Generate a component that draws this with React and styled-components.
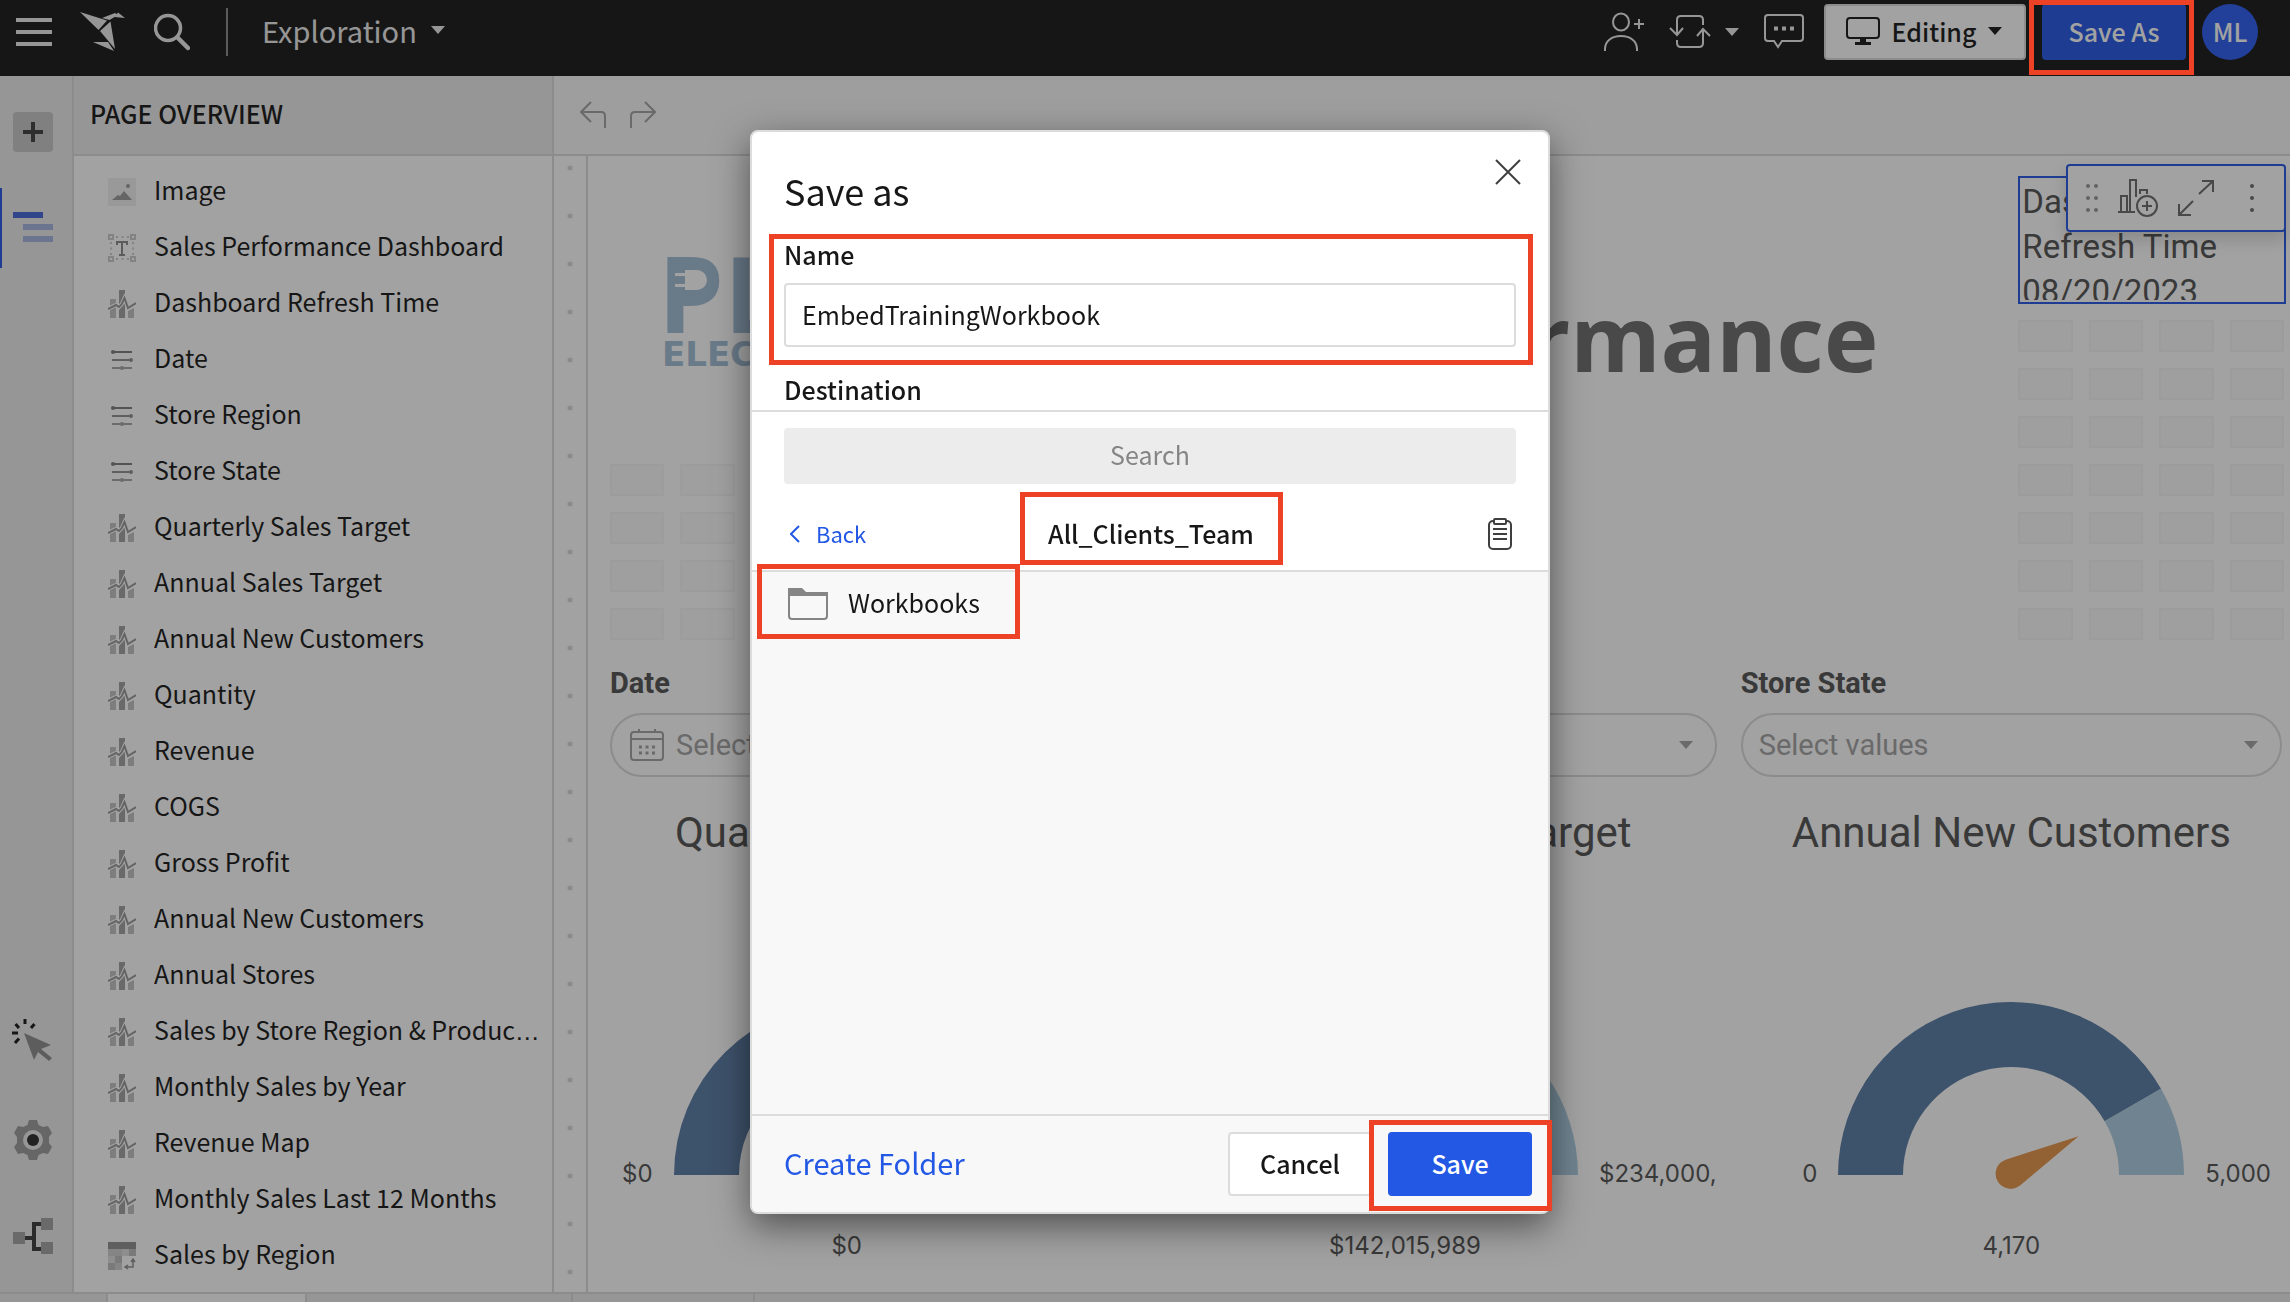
import React from "react";
import styled, { createGlobalStyle, css } from "styled-components";

const ui = `"Noto Sans CJK KR", "Noto Sans", sans-serif`;
const dash = `Roboto, "Open Sans", sans-serif`;
const blue = "#2358e4";
const line = "#dadada";

const GlobalStyle = createGlobalStyle`
  *, *::before, *::after { box-sizing: border-box; }
  body { margin: 0; background: #fff; color: #171717; font-family: ${ui}; font-size: 25px; line-height: 36px; overflow: hidden; }
  button, input, select { font: inherit; color: inherit; }
  button { padding: 0; border: 0; background: none; cursor: pointer; }
  h1, h2, h3, p, ul { margin: 0; padding: 0; font-weight: 400; }
  svg { display: block; flex: none; }
`;

const Page = styled.div`
  display: flex;
  flex-direction: column;
  height: 100vh;
`;

/* ---------- top bar ---------- */
const TopBar = styled.header`
  flex: none;
  display: flex;
  align-items: flex-start;
  justify-content: space-between;
  height: 76px;
  padding: 4px 32px 0 16px;
  background: #171717;
  color: #ececec;
`;
const BarGroup = styled.div`
  display: flex;
  align-items: center;
  height: 56px;
  gap: ${(p) => p.$gap}px;
`;
const BarTools = styled(BarGroup)`
  padding-right: 4px;
`;
const IconButton = styled.button`
  display: flex;
  align-items: center;
  gap: 14px;
`;
const DocButton = styled.button`
  display: flex;
  align-items: center;
  gap: 14px;
  height: 48px;
  margin-left: 8px;
  padding: 0 0 4px 34px;
  border-left: 2px solid #8a8a8a;
  font-size: 29px;
`;
const EditButton = styled.button`
  display: flex;
  align-items: center;
  justify-content: center;
  gap: 12px;
  width: 202px;
  height: 56px;
  padding: 0 2px 2px 0;
  border: 2px solid ${line};
  border-radius: 4px;
  background: #fff;
  color: #171717;
  font-weight: 500;
`;
const SaveAsButton = styled.button`
  width: 144px;
  height: 56px;
  padding-bottom: 2px;
  border-radius: 4px;
  background: ${blue};
  color: #fff;
  font-weight: 500;
`;
const Avatar = styled.button`
  width: 56px;
  height: 56px;
  padding-bottom: 2px;
  border-radius: 50%;
  background: #2a5cf0;
  color: #fff;
  font-weight: 500;
`;

/* ---------- body ---------- */
const Body = styled.div`
  flex: 1;
  min-height: 0;
  display: flex;
`;
const Rail = styled.nav`
  flex: none;
  display: flex;
  flex-direction: column;
  align-items: center;
  width: 74px;
  padding: 36px 7px 38px 0;
  border-right: 2px solid ${line};
  background: #ececec;
`;
const AddButton = styled.button`
  display: grid;
  place-items: center;
  width: 40px;
  height: 40px;
  border-radius: 4px;
  background: #c6c6c6;
`;
const RailTab = styled.button`
  align-self: stretch;
  display: flex;
  align-items: center;
  height: 80px;
  margin-top: 36px;
  padding: 0 0 2px 11px;
  border-left: 2px solid ${blue};
`;
const RailTools = styled.div`
  display: flex;
  flex-direction: column;
  align-items: center;
  gap: 58px;
  margin-top: auto;
`;
const Panel = styled.aside`
  flex: none;
  display: flex;
  flex-direction: column;
  width: 480px;
  border-right: 2px solid ${line};
`;
const PanelHead = styled.h2`
  display: flex;
  align-items: center;
  height: 80px;
  padding: 0 16px 4px;
  border-bottom: 2px solid ${line};
  background: #ececec;
  font-size: 25px;
  font-weight: 500;
`;
const List = styled.ul`
  flex: 1;
  min-height: 0;
  overflow: hidden;
  padding: 8px 8px 0 34px;
  list-style: none;
`;
const Row = styled.li`
  display: flex;
  align-items: center;
  gap: 18px;
  height: 56px;
`;
const RowLabel = styled.span`
  padding-bottom: 4px;
  overflow: hidden;
  font-family: "Liberation Sans", sans-serif;
  white-space: nowrap;
  text-overflow: ellipsis;
`;
const RowText = styled.span`
  font-family: ${ui};
`;

/* ---------- workbook ---------- */
const Work = styled.main`
  flex: 1;
  min-width: 0;
  display: flex;
  flex-direction: column;
`;
const WorkBar = styled.div`
  flex: none;
  display: flex;
  align-items: center;
  gap: 24px;
  height: 80px;
  padding: 0 26px;
  border-bottom: 2px solid ${line};
  background: #f8f8f8;
`;
const Stage = styled.div`
  flex: 1;
  min-height: 0;
  display: flex;
`;
const Gutter = styled.div`
  flex: none;
  width: 34px;
  border-right: 2px solid ${line};
  background: radial-gradient(circle at 16px 12px, #d8d8d8 2px, transparent 3px) 0 0 / 34px 48px;
`;
const Canvas = styled.div`
  flex: 1;
  min-width: 0;
  overflow: hidden;
  padding: 20px 8px 0 22px;
  font-family: ${dash};
  color: #515151;
`;
const Board = styled.section`
  display: grid;
  grid-template-columns: repeat(24, minmax(0, 1fr));
  grid-template-rows: repeat(10, 32px);
  gap: 16px;
  margin-right: -2px;
`;
const Cell = styled.div`
  border: 2px solid #f5f5f5;
  background: #fbfbfb;
`;
const Logo = styled.div`
  position: relative;
  grid-area: 1 / 1 / 7 / 6;
  padding: 70px 0 0 48px;
  color: #a0bcd5;
  white-space: nowrap;
  svg { position: absolute; left: 65px; top: 92px; }
`;
const LogoName = styled.div`
  font: 700 105px/94px "Open Sans", sans-serif;
`;
const LogoSub = styled.div`
  padding-left: 4px;
  font: 700 34px/28px "DejaVu Sans", sans-serif;
`;
const BoardTitle = styled.h1`
  grid-area: 1 / 6 / 8 / 20;
  align-self: center;
  padding: 2px 0 0 8px;
  color: #6c6c6c;
  font-family: "Open Sans", sans-serif;
  font-size: 92px;
  font-weight: 700;
  line-height: 112px;
  text-align: center;
  white-space: nowrap;
`;
const RefreshBox = styled.div`
  position: relative;
  grid-area: 1 / 21 / 4 / 25;
  margin-right: -2px;
  border: 2px solid ${blue};
`;
const RefreshText = styled.p`
  height: 122px;
  padding: 1px 2px;
  overflow: hidden;
  font-size: 33px;
  line-height: 45px;
`;
const FloatBar = styled.div`
  position: absolute;
  top: -14px;
  right: -2px;
  display: flex;
  align-items: center;
  gap: 20px;
  width: 220px;
  height: 68px;
  padding: 0 30px 0 18px;
  border: 2px solid ${blue};
  border-radius: 4px;
  background: #fff;
  box-shadow: 0 8px 16px rgba(0, 0, 0, 0.16);
  svg:last-child { margin-left: auto; }
`;
const Thirds = styled.section`
  display: grid;
  grid-template-columns: repeat(3, minmax(0, 1fr));
  gap: 24px;
  margin-top: ${(p) => p.$top}px;
`;
const Field = styled.div`
  display: flex;
  flex-direction: column;
  gap: 14px;
`;
const FieldLabel = styled.label`
  font-size: 29px;
  font-weight: 700;
  line-height: 32px;
`;
const Pill = styled.div`
  display: flex;
  align-items: center;
  gap: 12px;
  height: 64px;
  padding: 0 22px 0 ${(p) => (p.$icon ? 18 : 16)}px;
  border: 2px solid ${line};
  border-radius: 32px;
  color: #a2a2a2;
`;
const pillControl = css`
  flex: 1;
  min-width: 0;
  padding: 0;
  border: 0;
  outline: 0;
  background: none;
  appearance: none;
  color: #a2a2a2;
  font-size: 29px;
  line-height: 40px;
`;
const PillSelect = styled.select`${pillControl}`;
const PillInput = styled.input`
  ${pillControl}
  &::placeholder { color: #a2a2a2; opacity: 1; }
`;
const Gauge = styled.article`
  overflow: hidden;
  font-family: Inter, sans-serif;
`;
const GaugeTitle = styled.h3`
  font-family: ${dash};
  font-size: 42px;
  line-height: 56px;
  text-align: center;
`;
const Dial = styled.div`
  display: grid;
  grid-template-columns: minmax(0, 1fr) 346px minmax(0, 1fr);
  align-items: end;
  column-gap: 21px;
  margin-top: 141px;
  padding-right: ${(p) => p.$shift}px;
  font-size: 24px;
  line-height: 32px;
  white-space: nowrap;
`;
const DialEnd = styled.span`
  height: 36px;
  text-align: ${(p) => p.$align};
`;
const DialValue = styled.span`
  grid-column: 2;
  margin-top: 36px;
  text-align: center;
`;
const Sheets = styled.footer`
  flex: none;
  display: grid;
  grid-template-columns: 108px 199px 266px 182px 1fr;
  height: 10px;
  border-top: 2px solid ${line};
  background: #ececec;
`;
const Sheet = styled.div`
  border-right: ${(p) => (p.$last ? 0 : 2)}px solid ${line};
  background: ${(p) => (p.$active ? "#fff" : "none")};
`;

/* ---------- dialog ---------- */
const Backdrop = styled.div`
  position: fixed;
  inset: 0;
  display: flex;
  justify-content: center;
  align-items: flex-start;
  padding: 130px 0 0 10px;
  background: rgba(23, 23, 23, 0.4);
`;
const Mark = styled.div`
  position: absolute;
  top: ${(p) => p.$t}px;
  right: ${(p) => p.$r}px;
  bottom: ${(p) => p.$b}px;
  left: ${(p) => p.$l}px;
  border: 5px solid #ee4226;
  pointer-events: none;
`;
const SaveAsMark = styled.div`
  position: absolute;
  top: 0;
  right: 96px;
  width: 165px;
  height: 75px;
  border: 5px solid #ee4226;
  pointer-events: none;
`;
const Dialog = styled.form`
  display: flex;
  flex-direction: column;
  width: 800px;
  height: 1084px;
  border: 2px solid #dcdcdc;
  border-radius: 8px;
  background: #fff;
  box-shadow: 0 12px 36px rgba(0, 0, 0, 0.5);
`;
const DialogTop = styled.div`
  display: flex;
  justify-content: space-between;
  padding: 26px 26px 0 32px;
`;
const DialogTitle = styled.h2`
  padding-top: 8px;
  font-size: 36px;
  line-height: 48px;
`;
const CloseButton = styled.button`
  align-self: flex-start;
  padding: 1px;
`;
const NameField = styled.div`
  position: relative;
  display: flex;
  flex-direction: column;
  gap: 11px;
  margin: 22px 32px 0;
`;
const DialogLabel = styled.label`
  font-weight: 500;
  line-height: 36px;
`;
const NameInput = styled.input`
  height: 64px;
  padding: 0 16px 2px;
  border: 2px solid #dcdcdc;
  border-radius: 4px;
  outline: 0;
`;
const Destination = styled.div`
  padding: 24px 32px 3px;
  border-bottom: 2px solid #dcdcdc;
`;
const SearchInput = styled.input`
  height: 56px;
  margin: 16px 32px 0;
  padding: 0 16px 4px;
  border: 0;
  border-radius: 4px;
  background: #ececec;
  text-align: center;
  outline: 0;
  &::placeholder { color: #858585; opacity: 1; }
`;
const PathRow = styled.div`
  display: grid;
  grid-template-columns: 1fr auto 1fr;
  align-items: center;
  height: 88px;
  padding: 14px 36px 0 38px;
  border-bottom: 2px solid #dcdcdc;
`;
const BackButton = styled.button`
  justify-self: start;
  display: flex;
  align-items: center;
  gap: 16px;
  color: ${blue};
  font-size: 22px;
  span { padding-bottom: 2px; }
`;
const Folder = styled.div`
  position: relative;
  padding-bottom: 2px;
  font-weight: 500;
`;
const ClipButton = styled.button`
  justify-self: end;
`;
const Files = styled.div`
  flex: 1;
  background: #f8f8f8;
`;
const FileRow = styled.button`
  position: relative;
  display: flex;
  align-items: center;
  gap: 20px;
  height: 64px;
  padding: 0 40px 0 36px;
  span { padding-bottom: 4px; }
`;
const DialogFoot = styled.div`
  display: flex;
  align-items: center;
  gap: 16px;
  padding: 16px 16px 16px 32px;
  border-top: 2px solid #dcdcdc;
  border-radius: 0 0 6px 6px;
  background: #f8f8f8;
`;
const CreateButton = styled.button`
  margin-right: auto;
  padding-bottom: 4px;
  color: ${blue};
  font-size: 29px;
`;
const ActionButton = styled.button`
  width: 144px;
  height: 64px;
  padding-bottom: 2px;
  border: ${(p) => (p.$primary ? "0" : "2px solid #dcdcdc")};
  border-radius: 4px;
  background: ${(p) => (p.$primary ? blue : "#fff")};
  color: ${(p) => (p.$primary ? "#fff" : "#171717")};
  font-weight: 500;
`;
const ActionWrap = styled.div`
  position: relative;
  display: flex;
`;

/* ---------- icons ---------- */
const Caret = ({ size = 14 }) => (
  <svg width={size} height="8" viewBox="0 0 14 8"><path d="M0 0h14L7 8z" fill="currentColor" /></svg>
);
const MenuIcon = () => (
  <svg width="36" height="28" fill="currentColor"><path d="M0 0h36v4H0zM0 12h36v4H0zM0 24h36v4H0z" /></svg>
);
const BirdIcon = () => (
  <svg width="46" height="40" viewBox="0 0 46 40" fill="currentColor">
    <path d="M0 0 27 8.500 18.500 18z" /><path d="M22 6 35 1l3 2-8.500 5z" /><path d="M38 .500 45 6 34.500 5z" />
    <path d="M20 19 30.500 9.500 35 37z" /><path d="M13 30h15l6 9z" />
  </svg>
);
const SearchIcon = () => (
  <svg width="36" height="38" viewBox="0 0 36 38" fill="none" stroke="currentColor">
    <circle cx="14" cy="15" r="12.500" strokeWidth="3.500" /><path d="m24 25 10 10" strokeWidth="4.500" strokeLinecap="round" />
  </svg>
);
const PersonAddIcon = () => (
  <svg width="40" height="40" viewBox="0 0 40 40" fill="none" stroke="currentColor" strokeWidth="2">
    <ellipse cx="17" cy="10" rx="8" ry="8.500" /><path d="M1 39v-2c0-8 7-13 16-13s16 5 16 13v2M30 12h10M35 7v10" />
  </svg>
);
const SyncIcon = () => (
  <svg width="42" height="34" viewBox="0 0 42 34" fill="none" stroke="currentColor" strokeWidth="2">
    <path d="M34 10V5q0-4-4-4H12Q8 1 8 5v14M1 13l7 7 6-7M8 25v3q0 4 4 4h18q4 0 4-4V15M28 21l6-7 7 7" />
  </svg>
);
const CommentIcon = () => (
  <svg width="40" height="36" viewBox="0 0 40 36" fill="none" stroke="currentColor" strokeWidth="2">
    <path d="M4 1h32q3 0 3 3v20q0 3-3 3H18l-4 6-4-6H4q-3 0-3-3V4q0-3 3-3z" />
    <path d="M10 12.500v4h4v-4zM18 12.500v4h4v-4zM26 12.500v4h4v-4z" fill="currentColor" stroke="none" />
  </svg>
);
const MonitorIcon = () => (
  <svg width="34" height="28" viewBox="0 0 34 28" fill="none" stroke="currentColor" strokeWidth="2">
    <rect x="1" y="1" width="32" height="20" rx="3" /><path d="M14 22h6v4h-6z" fill="currentColor" stroke="none" /><path d="M9 26.500h16" strokeWidth="3" />
  </svg>
);
const PlusIcon = () => (
  <svg width="20" height="20" fill="#3f3f3f"><path d="M8 0h4v8h8v4h-8v8H8v-8H0V8h8z" /></svg>
);
const OutlineIcon = () => (
  <svg width="40" height="30"><path d="M0 0h30v6H0z" fill="#4467d8" /><path d="M10 12h30v6H10zM10 24h30v6H10z" fill="#a6b4e0" /></svg>
);
const CursorIcon = () => (
  <svg width="42" height="44" viewBox="0 0 42 44">
    <path d="M13 1v5M3.500 6l3.500 4M22.500 6 19 10M0 15h6M3 25l4-4.500" stroke="#171717" strokeWidth="3" fill="none" />
    <path d="M12 15 39 27l-10 4 11 9-3 3-11-9-4 8z" fill="#8d8d8d" />
  </svg>
);
const GearIcon = () => (
  <svg width="40" height="40" viewBox="0 0 40 40">
    <path d="M16 0h8l1.500 5 4.500 2 5-1 4 7-3 4v6l3 4-4 7-5-1-4.500 2L24 40h-8l-1.500-5L10 33l-5 1-4-7 3-4v-6l-3-4 4-7 5 1 4.500-2z" fill="#9b9b9b" />
    <circle cx="20" cy="20" r="10" fill="#ececec" /><circle cx="20" cy="20" r="6" fill="#2a2a2a" />
  </svg>
);
const TreeIcon = () => (
  <svg width="40" height="36" viewBox="0 0 40 36">
    <path d="M12 20h8M30 6h-9v25h9" fill="none" stroke="#3a3a3a" strokeWidth="4" />
    <path d="M0 14h12v12H0zM28 0h12v12H28zM28 24h12v12H28z" fill="#a2a2a2" />
  </svg>
);
const ImageIcon = () => (
  <svg width="28" height="28"><path d="M0 0h28v28H0z" fill="#f0f0f0" /><path d="m4 22 6-5 2 1 4-5 8 9z" fill="#999" /><circle cx="20" cy="8" r="2" fill="#999" /></svg>
);
const TextIcon = () => (
  <svg width="28" height="28" fill="none" stroke="#ccc" strokeWidth="2">
    <path d="M1 1h4v4H1zM23 1h4v4h-4zM1 23h4v4H1zM23 23h4v4h-4z" />
    <path d="M8 3h13M8 25h13M3 8v13M25 8v13" strokeDasharray="2 3.500" />
    <path d="M9 11V8h10v3M14 8v13M11 21h6" stroke="#8a8a8a" />
  </svg>
);
const ControlIcon = () => (
  <svg width="28" height="28"><path d="M4 5h20v2H4z" fill="#7c7c7c" /><path d="M4 13h20v2H4z" fill="#909090" /><path d="M4 21h20v2H4z" fill="#a5a5a5" />
    <circle cx="5" cy="6" r="2" fill="#7c7c7c" /><circle cx="23" cy="14" r="2" fill="#909090" /><circle cx="14" cy="22" r="2" fill="#a5a5a5" /></svg>
);
const ChartIcon = () => (
  <svg width="28" height="28" viewBox="0 0 28 28">
    <path d="M2 9h6v4l-6 3zM2 19l6-3v12H2zM20 21l6-3v10h-6z" fill="#c2c2c2" />
    <path d="M11 0h6v6l-5 9h-1zM11 20l6-8v16h-6z" fill="#a0a0a0" />
    <path d="m0 19 8-4 3 2c4-3 4-6 5.500-9L20 18l8-5" fill="none" stroke="#fff" strokeWidth="4" />
    <path d="m0 19 8-4 3 2c4-3 4-6 5.500-9L20 18l8-5" fill="none" stroke="#9a9a9a" strokeWidth="2" />
  </svg>
);
const PivotIcon = () => (
  <svg width="28" height="28"><path d="M0 0h28v7H0z" fill="#909090" /><path d="M0 7h28v7H14v14H0z" fill="#cfcfcf" /><path d="M0 14h7v7H0zM14 7h7v7h-7z" fill="#dedede" /><path d="M7 14h7v7H7zM21 7h7v7h-7zM0 21h7v7H0z" fill="#bdbdbd" />
    <path d="M25 18v7h-7M23 20l2-3 2 3M20 23l-3 2 3 2" fill="none" stroke="#909090" strokeWidth="1.500" /></svg>
);
const UndoIcon = () => (
  <svg width="26" height="28" fill="none" stroke="#a2a2a2" strokeWidth="2"><path d="M11 1 1 11l10 10M1 11h20q4 0 4 4v12" /></svg>
);
const RedoIcon = () => (
  <svg width="26" height="28" fill="none" stroke="#a2a2a2" strokeWidth="2"><path d="m15 1 10 10-10 10M25 11H5q-4 0-4 4v12" /></svg>
);
const DragIcon = () => (
  <svg width="12" height="28" fill="#979797"><circle cx="2" cy="2" r="2" /><circle cx="10" cy="2" r="2" /><circle cx="2" cy="14" r="2" /><circle cx="10" cy="14" r="2" /><circle cx="2" cy="26" r="2" /><circle cx="10" cy="26" r="2" /></svg>
);
const ChartAddIcon = () => (
  <svg width="40" height="38" fill="none" stroke="#6a6a6a" strokeWidth="2">
    <path d="M0 33h17M3 33V17h6v16M12 33V1h6v17M22 15v-4h7v4" /><circle cx="29" cy="27" r="10" /><path d="M24 27h10M29 22v10" />
  </svg>
);
const ExpandIcon = () => (
  <svg width="36" height="36" fill="none" stroke="#6a6a6a" strokeWidth="2"><path d="M24 1h11v11M35 1 21 14M1 24v11h12M1 35l14-14" /></svg>
);
const KebabIcon = () => (
  <svg width="4" height="28" fill="#6a6a6a"><circle cx="2" cy="2" r="2" /><circle cx="2" cy="14" r="2" /><circle cx="2" cy="26" r="2" /></svg>
);
const CalendarIcon = () => (
  <svg width="34" height="32" fill="none" stroke="#a2a2a2" strokeWidth="2">
    <rect x="1" y="3" width="32" height="28" rx="3" /><path d="M1 10h32M9 0v3M25 0v3" /><path d="M9 18h3M15.500 18h3M22 18h3M9 24h3M15.500 24h3M22 24h3" strokeWidth="3" />
  </svg>
);
const CloseIcon = () => (
  <svg width="26" height="26" stroke="#3f3f3f" strokeWidth="2"><path d="m1 1 24 24M25 1 1 25" /></svg>
);
const BackIcon = () => (
  <svg width="10" height="18" fill="none" stroke={blue} strokeWidth="2"><path d="M9 1 1 9l8 8" /></svg>
);
const ClipboardIcon = () => (
  <svg width="24" height="32" fill="none" stroke="#3f3f3f" strokeWidth="2">
    <rect x="1" y="3" width="22" height="28" rx="4" /><rect x="6" y="1" width="12" height="5" rx="1" fill="#fff" /><path d="M5 11h14M5 16h14M5 21h14" />
  </svg>
);
const FolderIcon = () => (
  <svg width="40" height="32"><path d="M0 0h14l4 4h22v4H0z" fill="#858585" /><path d="M1 7v21q0 3 3 3h32q3 0 3-3V7" fill="none" stroke="#858585" strokeWidth="2" /></svg>
);

const polar = (r, t) => `${173 - r * Math.cos(Math.PI * t)} ${173 - r * Math.sin(Math.PI * t)}`;
const arc = (a, b) => `M${polar(173, a)}A173 173 0 0 1 ${polar(173, b)}L${polar(108, b)}A108 108 0 0 0 ${polar(108, a)}z`;
const DialArt = ({ value }) => (
  <svg width="346" height="192" viewBox="0 0 346 192">
    <path d={arc(0, value)} fill="#587aa3" />
    <path d={arc(value, 1)} fill="#abcce1" />
    <g transform={`rotate(${value * 180} 173 173)`}>
      <path d="M95 173 170 159.500A15 15 0 1 1 170 189z" fill="#e69448" />
    </g>
  </svg>
);

const items = [
  [ImageIcon, "Image"], [TextIcon, "Sales Performance Dashboard"], [ChartIcon, "Dashboard Refresh Time"],
  [ControlIcon, "Date"], [ControlIcon, "Store Region"], [ControlIcon, "Store State"],
  [ChartIcon, "Quarterly Sales Target"], [ChartIcon, "Annual Sales Target"], [ChartIcon, "Annual New Customers"],
  [ChartIcon, "Quantity"], [ChartIcon, "Revenue"], [ChartIcon, "COGS"], [ChartIcon, "Gross Profit"],
  [ChartIcon, "Annual New Customers"], [ChartIcon, "Annual Stores"], [ChartIcon, "Sales by Store Region & Product Family"],
  [ChartIcon, "Monthly Sales by Year"], [ChartIcon, "Revenue Map"], [ChartIcon, "Monthly Sales Last 12 Months"],
  [PivotIcon, "Sales by Region"],
];
const gauges = [
  { title: "Quarterly Sales Target", min: "$0", max: "", now: "$0", value: 0.5, shift: 68 },
  { title: "Annual Sales Target", min: "$0", max: "$234,000,000", now: "$142,015,989", value: 0.607, shift: 82 },
  { title: "Annual New Customers", min: "0", max: "5,000", now: "4,170", value: 0.834, shift: 0 },
];
const cells = [];
for (let r = 7; r <= 10; r++) for (let c = 1; c <= 4; c++) cells.push([r, c]);
for (let r = 4; r <= 10; r++) for (let c = 21; c <= 24; c++) cells.push([r, c]);

function SaveDialog() {
  return (
    <Dialog role="dialog" aria-labelledby="save-title" onSubmit={(e) => e.preventDefault()}>
      <DialogTop>
        <DialogTitle id="save-title">Save as</DialogTitle>
        <CloseButton type="button" aria-label="Close"><CloseIcon /></CloseButton>
      </DialogTop>
      <NameField>
        <DialogLabel htmlFor="name">Name</DialogLabel>
        <NameInput id="name" defaultValue="EmbedTrainingWorkbook" />
        <Mark $t={-2} $r={-17} $b={-18} $l={-15} />
      </NameField>
      <Destination><DialogLabel htmlFor="search">Destination</DialogLabel></Destination>
      <SearchInput id="search" placeholder="Search" />
      <PathRow>
        <BackButton type="button"><BackIcon /><span>Back</span></BackButton>
        <Folder>All_Clients_Team<Mark $t={-23} $r={-29} $b={-12} $l={-28} /></Folder>
        <ClipButton type="button" aria-label="Paste location"><ClipboardIcon /></ClipButton>
      </PathRow>
      <Files>
        <FileRow type="button"><FolderIcon /><span>Workbooks</span><Mark $t={-8} $r={0} $b={-3} $l={5} /></FileRow>
      </Files>
      <DialogFoot>
        <CreateButton type="button">Create Folder</CreateButton>
        <ActionButton type="button">Cancel</ActionButton>
        <ActionWrap>
          <ActionButton $primary>Save</ActionButton>
          <Mark $t={-12} $r={-20} $b={-15} $l={-19} />
        </ActionWrap>
      </DialogFoot>
    </Dialog>
  );
}

export default function App() {
  return (
    <>
      <GlobalStyle />
      <Page>
        <TopBar>
          <BarGroup $gap={28}>
            <IconButton aria-label="Menu"><MenuIcon /></IconButton>
            <IconButton aria-label="Home"><BirdIcon /></IconButton>
            <IconButton aria-label="Search"><SearchIcon /></IconButton>
            <DocButton>Exploration<Caret /></DocButton>
          </BarGroup>
          <BarGroup $gap={16}>
            <BarTools $gap={25}>
              <IconButton aria-label="Share"><PersonAddIcon /></IconButton>
              <IconButton aria-label="Refresh"><SyncIcon /><Caret /></IconButton>
              <IconButton aria-label="Comments"><CommentIcon /></IconButton>
            </BarTools>
            <EditButton><MonitorIcon />Editing<Caret /></EditButton>
            <SaveAsButton>Save As</SaveAsButton>
            <Avatar>ML</Avatar>
          </BarGroup>
        </TopBar>
        <Body>
          <Rail>
            <AddButton aria-label="Add"><PlusIcon /></AddButton>
            <RailTab aria-label="Page overview"><OutlineIcon /></RailTab>
            <RailTools>
              <IconButton aria-label="Actions"><CursorIcon /></IconButton>
              <IconButton aria-label="Settings"><GearIcon /></IconButton>
              <IconButton aria-label="Lineage"><TreeIcon /></IconButton>
            </RailTools>
          </Rail>
          <Panel>
            <PanelHead>PAGE OVERVIEW</PanelHead>
            <List>
              {items.map(([Icon, label], i) => (
                <Row key={i}><Icon /><RowLabel><RowText>{label}</RowText></RowLabel></Row>
              ))}
            </List>
          </Panel>
          <Work>
            <WorkBar>
              <IconButton aria-label="Undo"><UndoIcon /></IconButton>
              <IconButton aria-label="Redo"><RedoIcon /></IconButton>
            </WorkBar>
            <Stage>
              <Gutter />
              <Canvas>
                <Board>
                  <Logo>
                    <LogoName>PL</LogoName>
                    <LogoSub>ELEC</LogoSub>
                    <svg width="36" height="26" viewBox="0 0 36 26">
                      <path d="M8 0h20v26H8z" fill="#a0bcd5" />
                      <path d="M0 5h10V2h12a10 10 0 0 1 0 20H10v-3H0v-3h10V8H0z" fill="#fff" />
                    </svg>
                  </Logo>
                  <BoardTitle>Sales Performance</BoardTitle>
                  {cells.map(([r, c]) => <Cell key={`${r}-${c}`} style={{ gridRow: r, gridColumn: c }} />)}
                  <RefreshBox>
                    <RefreshText>Dashboard<br />Refresh Time<br />08/20/2023</RefreshText>
                    <FloatBar><DragIcon /><ChartAddIcon /><ExpandIcon /><KebabIcon /></FloatBar>
                  </RefreshBox>
                </Board>
                <Thirds $top={27}>
                  <Field>
                    <FieldLabel htmlFor="date">Date</FieldLabel>
                    <Pill $icon><CalendarIcon /><PillInput id="date" placeholder="Select a date" /></Pill>
                  </Field>
                  <Field>
                    <FieldLabel htmlFor="region">Store Region</FieldLabel>
                    <Pill><PillSelect id="region"><option>Select values</option></PillSelect><Caret /></Pill>
                  </Field>
                  <Field>
                    <FieldLabel htmlFor="state">Store State</FieldLabel>
                    <Pill><PillSelect id="state"><option>Select values</option></PillSelect><Caret /></Pill>
                  </Field>
                </Thirds>
                <Thirds $top={28}>
                  {gauges.map((g) => (
                    <Gauge key={g.title}>
                      <GaugeTitle>{g.title}</GaugeTitle>
                      <Dial $shift={g.shift}>
                        <DialEnd $align="right">{g.min}</DialEnd>
                        <DialArt value={g.value} />
                        <DialEnd>{g.max}</DialEnd>
                        <DialValue>{g.now}</DialValue>
                      </Dial>
                    </Gauge>
                  ))}
                </Thirds>
              </Canvas>
            </Stage>
          </Work>
        </Body>
        <Sheets><Sheet /><Sheet $active /><Sheet /><Sheet /><Sheet $last /></Sheets>
      </Page>
      <Backdrop>
        <SaveAsMark />
        <SaveDialog />
      </Backdrop>
    </>
  );
}
